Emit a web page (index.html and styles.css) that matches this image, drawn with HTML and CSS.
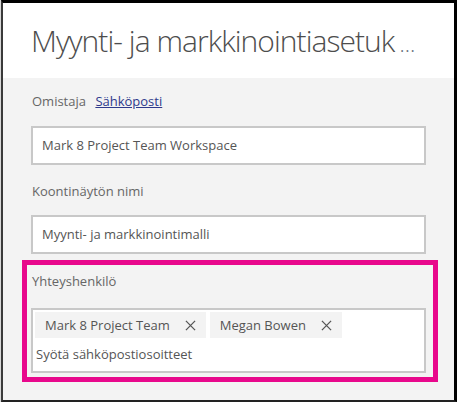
FILE: index.html
```html
<!DOCTYPE html>
<html lang="fi">
<head>
<meta charset="utf-8">
<title>Myynti- ja markkinointiasetukset</title>
<link rel="stylesheet" href="styles.css">
</head>
<body>
<div class="window">
  <header class="header">
    <h1 class="title">Myynti- ja markkinointiasetuk<span class="dots">…</span></h1>
  </header>
  <main class="content">
    <div class="label owner">Omistaja <a class="link" href="#">Sähköposti</a></div>
    <div class="field">Mark 8 Project Team Workspace</div>
    <div class="label second">Koontinäytön nimi</div>
    <div class="field field-two">Myynti- ja markkinointimalli</div>
    <section class="highlight">
      <div class="label contact-label">Yhteyshenkilö</div>
      <div class="people">
        <div class="chips">
          <span class="chip">Mark 8 Project Team
            <svg class="x" viewBox="0 0 12 12" width="12" height="12"><path d="M1 1 L11 11 M11 1 L1 11" stroke="#555" stroke-width="1.4" fill="none"/></svg>
          </span>
          <span class="chip">Megan Bowen
            <svg class="x" viewBox="0 0 12 12" width="12" height="12"><path d="M1 1 L11 11 M11 1 L1 11" stroke="#555" stroke-width="1.4" fill="none"/></svg>
          </span>
        </div>
        <div class="placeholder">Syötä sähköpostiosoitteet</div>
      </div>
    </section>
  </main>
</div>
</body>
</html>
```
FILE: styles.css
```css
html, body {
  margin: 0;
  padding: 0;
  background: #d8d8d8;
}
body {
  font-family: "Open Sans", "Noto Sans", sans-serif;
  color: #555;
}
.window {
  margin-left: 1px;
  height: 402px;
  box-sizing: border-box;
  border-top: 3px solid #000;
  border-right: 3px solid #000;
  border-bottom: 2px solid #222;
  border-left: 2px solid #3a3a3a;
  background: #f3f3f3;
  display: flex;
  flex-direction: column;
}
.header {
  background: #fff;
  height: 75px;
  box-sizing: border-box;
  padding: 18px 0 0 28px;
}
.title {
  margin: 0;
  font-weight: 300;
  font-size: 30px;
  line-height: 40px;
  color: #4d4d4d;
  white-space: nowrap;
  letter-spacing: -0.95px;
}
.dots {
  margin-left: 5px;
  font-size: 22px;
  letter-spacing: 0;
  color: #6a7480;
}
.content {
  padding: 13px 28px 0 28px;
  display: flex;
  flex-direction: column;
}
.label {
  font-size: 13px;
  line-height: 20px;
  color: #666;
  padding-left: 1px;
}
.link {
  color: #2e3a8c;
  text-decoration: underline;
  margin-left: 6px;
}
.field {
  margin-top: 15px;
  height: 39px;
  box-sizing: border-box;
  border: 2px solid #c8c8c8;
  background: #fff;
  padding-left: 9px;
  font-size: 13px;
  line-height: 35px;
  color: #555;
}
.second {
  margin-top: 16px;
}
.field-two {
  margin-top: 14px;
}
.highlight {
  margin: 6px -12px 0 -9px;
  border: 5px solid #e8088c;
  padding: 6px 7px 4px 4px;
}
.contact-label {
  line-height: 20px;
}
.people {
  margin-top: 17px;
  height: 65px;
  box-sizing: border-box;
  border: 2px solid #c8c8c8;
  background: #fff;
  padding: 2px;
}
.chips {
  display: flex;
  gap: 4px;
}
.chip {
  display: flex;
  align-items: center;
  gap: 15px;
  height: 26px;
  padding: 0 10px 0 10px;
  background: #f3f3f3;
  font-size: 13px;
  color: #555;
}
.x {
  display: block;
  width: 11px;
  height: 11px;
}
.placeholder {
  padding-left: 1px;
  font-size: 13px;
  line-height: 32px;
  color: #555;
}
```
